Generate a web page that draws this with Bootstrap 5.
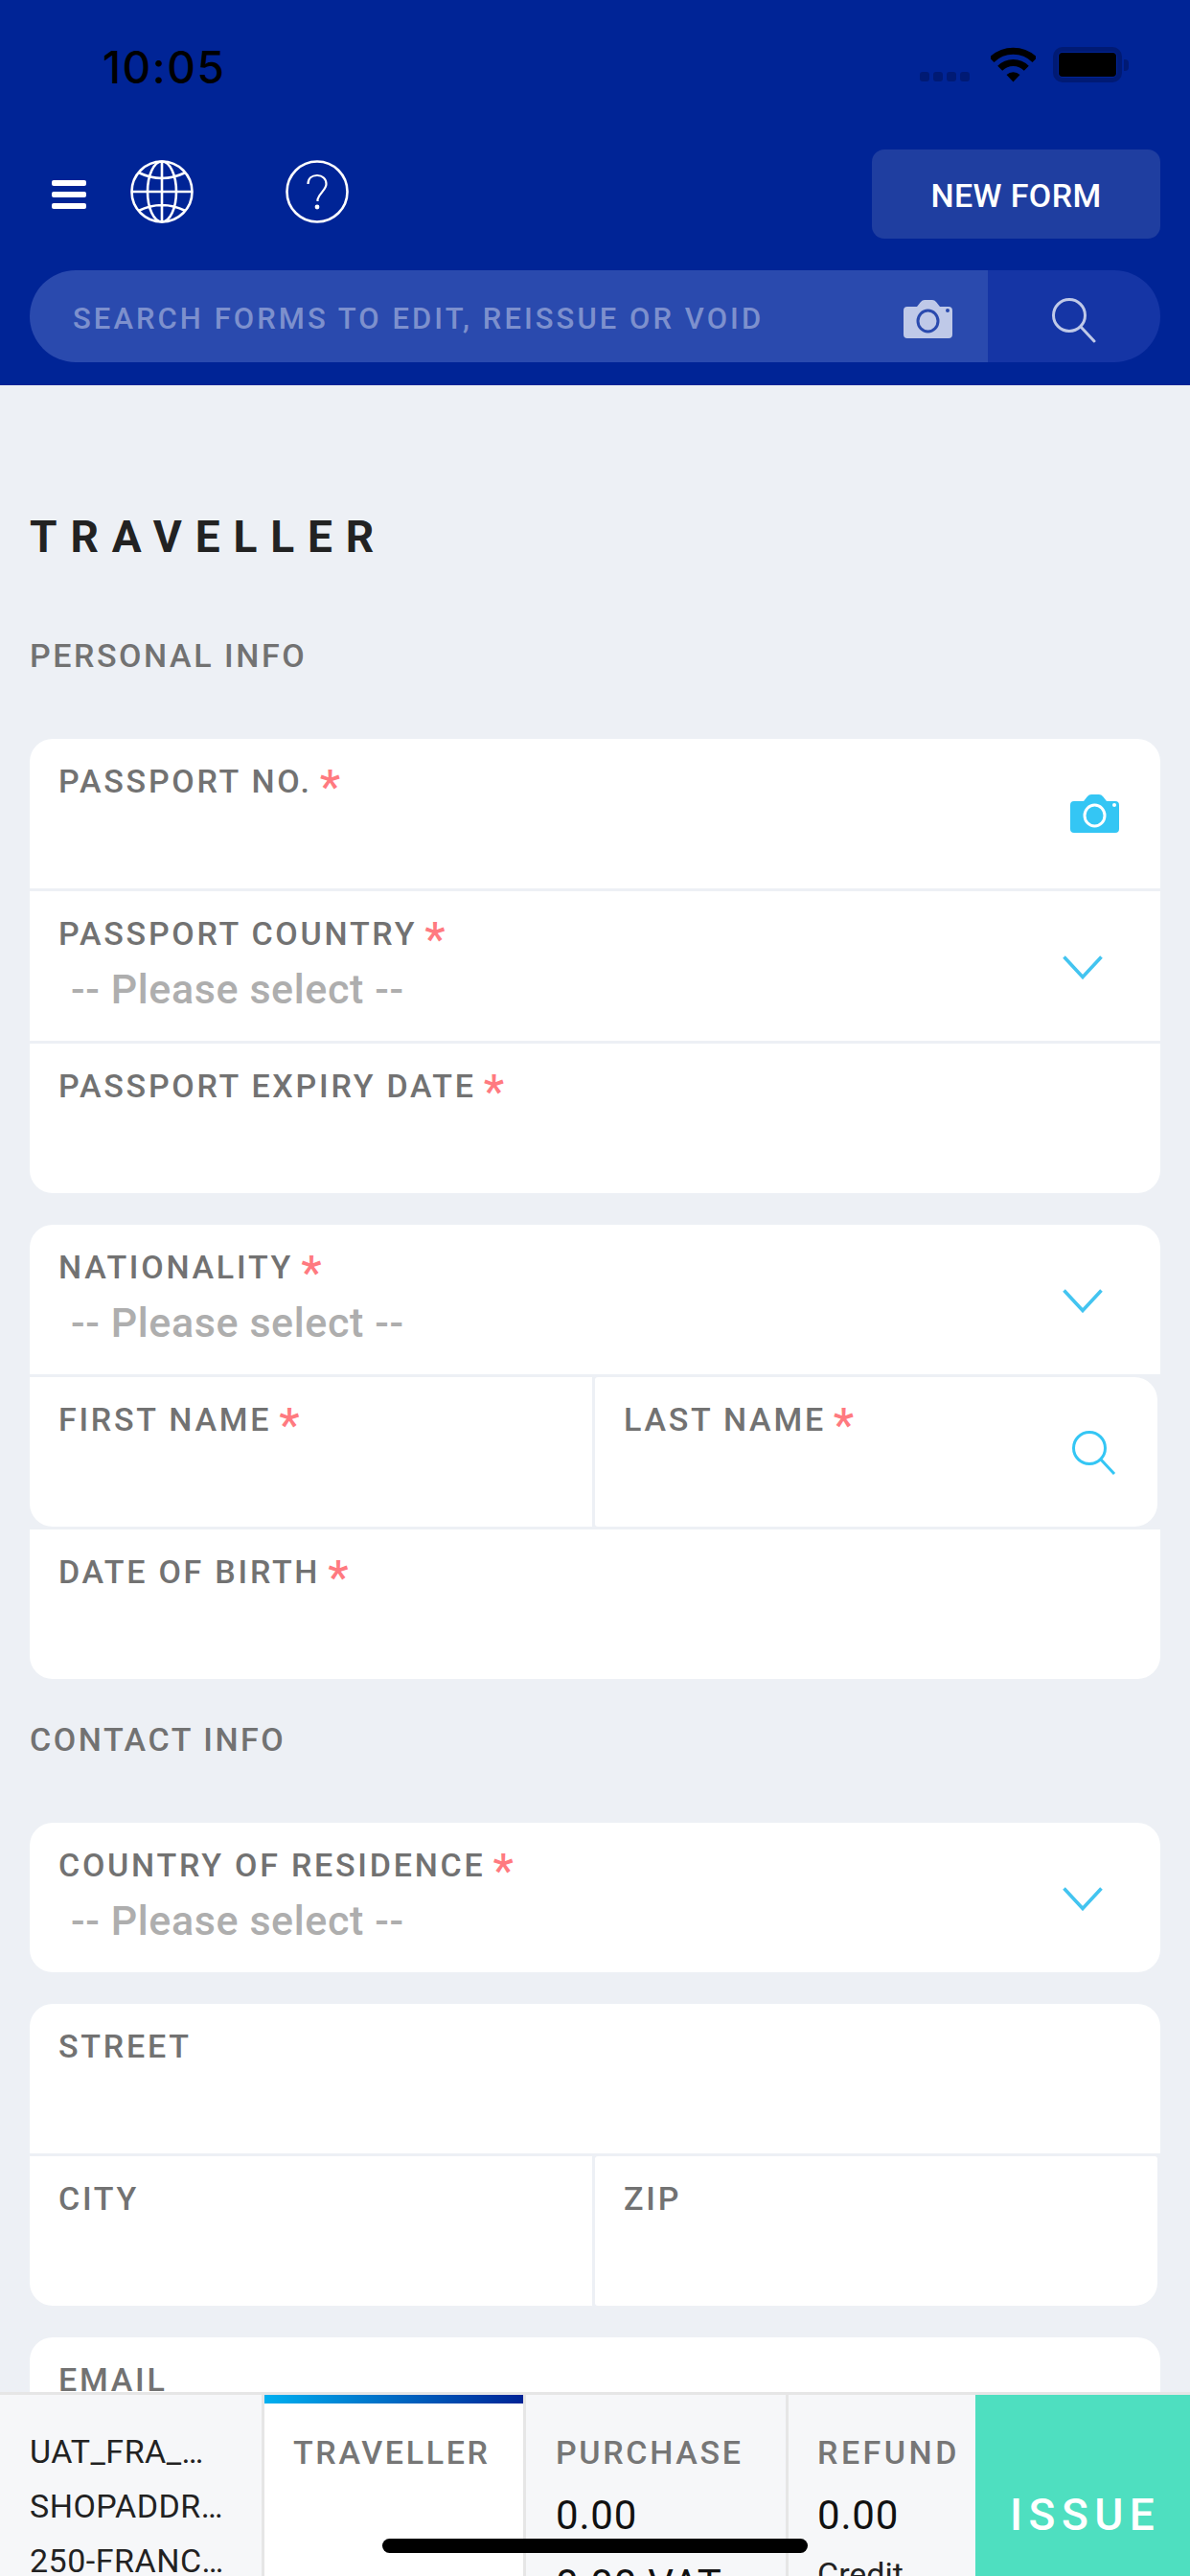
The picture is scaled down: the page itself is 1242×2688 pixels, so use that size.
<!DOCTYPE html>
<html lang="en">
<head>
<meta charset="utf-8">
<title>Traveller</title>
<link rel="stylesheet" href="https://cdn.jsdelivr.net/npm/bootstrap@5.3.0/dist/css/bootstrap.min.css">
<style>
html,body{width:1242px;height:2688px;overflow:hidden}
body{font-family:Roboto,"Liberation Sans",sans-serif;background:#edf0f5;color:#222;position:relative}
.shell{height:2688px}
.topbar{height:402px;background:#002496;padding:0 31px}
.statusrow{height:156px;padding-top:49px}
.clock{margin-left:76px;margin-top:-2px;font:500 46px/46px Inter,Roboto,sans-serif;color:#000;letter-spacing:1.5px;height:46px}
.signal{gap:4px;margin-top:26px;margin-right:22px}
.signal i{display:block;width:10px;height:10px;border-radius:3px;background:#001a74}
.batt{width:72px;height:37px;border:5px solid #001a74;border-radius:10px;padding:1px;margin-left:18px}
.batt b{display:block;height:100%;border-radius:4px;background:#000}
.battnub{width:5px;height:12px;background:#001a74;border-radius:0 4px 4px 0;margin:0 33px 0 2px;align-self:center}
.toolrow{height:93px}
.burger{margin-left:23px;margin-top:1px;width:36px;gap:6px}
.burger i{display:block;height:6px;border-radius:2px;background:#fff}
.ico-globe{margin-left:46px;margin-top:-5px}
.ico-help{margin-left:96px;margin-top:-5px}
.newform.btn{margin-left:auto;width:301px;height:93px;padding:3px 0 0;background:#1f3ea0;border:0;border-radius:13px;color:#fff;font-size:34px;font-weight:500;letter-spacing:.4px}
.searchbar{margin-top:33px;height:96px;border-radius:48px;overflow:hidden}
.searchtext{width:1000px;background:#2a4aae;padding:6px 37px 0 45px}
.searchtext span{font-size:31px;font-weight:500;letter-spacing:3.05px;color:#7d90cd;white-space:nowrap}
.searchgo{flex:1;background:#1535a5;padding:9px 0 0 67px}
.page{padding:0 31px;height:2094px;overflow:hidden}
.pagetitle{margin:128px 0 0;font-size:46px;line-height:60px;font-weight:700;letter-spacing:13.9px;color:#222}
.subtitle{font-size:34px;line-height:40px;font-weight:500;color:#727272;letter-spacing:2.55px;margin:0}
.sub-a{margin-top:74px}
.sub-b{margin-top:43px}
.stack{gap:33px;margin-top:67px}
.fcard.card{border:0;border-radius:24px;overflow:hidden;background:#edf0f5;gap:3px}
.frow{height:156px;background:#fff}
.frow.pair{background:#edf0f5}
.fcell{background:#fff;padding:24px 0 0 30px;height:156px}
.fleft{width:587px}
.fright{width:587px;margin-left:3px}
.bl-round{border-bottom-left-radius:24px}
.r-round{border-radius:3px 24px 24px 3px}
.br-round{border-radius:3px 3px 24px 3px}
.flabel{font-size:34px;line-height:40px;font-weight:500;letter-spacing:2.75px;color:#727272;margin:0;white-space:nowrap}
.req{color:#ff7a80;margin-left:8px;font-size:48px;line-height:0;font-weight:500;letter-spacing:0;vertical-align:-10px}
.fvalue{font-size:43px;line-height:48px;font-weight:500;color:#aeaeae;margin:14px 0 0 13px;letter-spacing:.6px;white-space:nowrap}
.side-cam{margin-right:43px;margin-top:-24px}
.side-chev{margin-right:60px;margin-top:-21px}
.side-find{margin-right:43px;margin-top:-21px}
.dock{height:192px;border-top:3px solid #e6e6e6;background:#f6f7f9;overflow:hidden}
.dcell{height:189px;border-right:3px solid #e6e6e6;overflow:hidden;padding:40px 0 0 30px}
.dshop{width:276px;padding:31px 0 0 31px;font-size:34px;line-height:57px;color:#222;letter-spacing:.5px}
.dshop div{white-space:nowrap}
.dtrav{width:273px;background:#fff;position:relative}
.dtrav::before{content:"";position:absolute;left:0;right:0;top:0;height:9px;background:linear-gradient(90deg,#00b0f0,#002496)}
.dpur{width:274px;padding-left:31px}
.dref{width:195px;border-right:0}
.dhead{font-size:34px;font-weight:500;line-height:40px;letter-spacing:2.65px;color:#767676;white-space:nowrap}
.dref .dhead{letter-spacing:3.5px}
.dnum{font-size:42px;line-height:48px;color:#111;margin-top:22px;letter-spacing:.8px;white-space:nowrap}
.dnum2{margin-top:24px}
.dnote{font-size:34px;line-height:40px;color:#222;margin-top:17px}
.dissue{width:224px;height:189px;background:#4edfc0;color:#fff;font-size:46px;line-height:60px;font-weight:500;letter-spacing:6.5px;padding:95px 0 0 36px}
.homebar{position:absolute;left:399px;top:2649px;width:444px;height:15px;border-radius:8px;background:#000}
</style>
</head>
<body>
<div class="shell d-flex flex-column">
  <header class="topbar">
    <div class="statusrow d-flex align-items-start">
      <div class="clock">10:05</div>
      <div class="ms-auto d-flex align-items-start">
        <div class="signal d-flex"><i></i><i></i><i></i><i></i></div>
        <svg width="47" height="37" viewBox="0 0 47 37" aria-hidden="true"><path d="M1 13.4A32 32 0 0 1 46 13.4M9.7 22.2A19.5 19.5 0 0 1 37.3 22.2" fill="none" stroke="#000" stroke-width="7"/><path d="M23.5 36.5L16.5 29A10 10 0 0 1 30.5 29Z" fill="#000"/></svg>
        <div class="batt"><b></b></div>
        <div class="battnub"></div>
      </div>
    </div>
    <div class="toolrow d-flex align-items-center">
      <div class="burger d-flex flex-column"><i></i><i></i><i></i></div>
      <svg class="ico-globe" width="66" height="66" viewBox="0 0 66 66" fill="none" stroke="#fff" stroke-width="2.6" aria-hidden="true"><circle cx="33" cy="33" r="31.5"/><ellipse cx="33" cy="33" rx="15" ry="31.5"/><path d="M33 1.5V64.5M1.5 33H64.5M8.5 13Q33 25 57.5 13M8.5 53Q33 41 57.5 53"/></svg>
      <svg class="ico-help" width="66" height="66" viewBox="0 0 66 66" fill="none" stroke="#fff" stroke-width="2.6" aria-hidden="true"><circle cx="33" cy="33" r="31.5"/><path d="M23.5 25C23.5 19 27.5 16 33 16C38.5 16 42.5 19.5 42.5 25C42.5 31 35.5 34 33.5 41V43" stroke-width="2.2"/><circle cx="33" cy="49" r="2.4" fill="#fff" stroke="none"/></svg>
      <button type="button" class="btn newform">NEW FORM</button>
    </div>
    <div class="searchbar d-flex">
      <div class="searchtext d-flex align-items-center justify-content-between">
        <span>SEARCH FORMS TO EDIT, REISSUE OR VOID</span>
        <svg width="51" height="40" viewBox="0 0 51 40" aria-hidden="true"><path d="M4 7H14L18 2Q19.5 0 22 0H30Q32.5 0 34 2L38 7H47Q51 7 51 11V36Q51 40 47 40H4Q0 40 0 36V11Q0 7 4 7Z" fill="#bfc9e8"/><ellipse cx="25.5" cy="22" rx="10.5" ry="11" fill="none" stroke="#2a4aae" stroke-width="3"/><circle cx="46" cy="11" r="2" fill="#2a4aae"/></svg>
      </div>
      <div class="searchgo d-flex align-items-center">
        <svg width="46" height="47" viewBox="0 0 46 47" fill="none" stroke="#bfc9e8" stroke-width="3" aria-hidden="true"><circle cx="18" cy="18" r="16.5"/><path d="M30 30L44 45" stroke-linecap="round"/></svg>
      </div>
    </div>
  </header>

  <main class="page">
    <h1 class="pagetitle">TRAVELLER</h1>
    <h2 class="subtitle sub-a">PERSONAL INFO</h2>
    <div class="stack d-flex flex-column">
      <section class="fcard card">
        <div class="frow fcell d-flex justify-content-between align-items-center">
          <div class="align-self-start"><p class="flabel">PASSPORT NO.<span class="req">*</span></p></div>
          <svg class="side-cam" width="51" height="40" viewBox="0 0 51 40" aria-hidden="true"><path d="M4 7H14L18 2Q19.5 0 22 0H30Q32.5 0 34 2L38 7H47Q51 7 51 11V36Q51 40 47 40H4Q0 40 0 36V11Q0 7 4 7Z" fill="#34c6f4"/><ellipse cx="25.5" cy="22" rx="10.5" ry="11" fill="none" stroke="#fff" stroke-width="3"/><circle cx="46" cy="11" r="2" fill="#fff"/></svg>
        </div>
        <div class="frow fcell d-flex justify-content-between align-items-center">
          <div class="align-self-start"><p class="flabel">PASSPORT COUNTRY<span class="req">*</span></p><p class="fvalue">-- Please select --</p></div>
          <svg class="side-chev" width="42" height="25" viewBox="0 0 42 25" fill="none" stroke="#43c4f0" stroke-width="3.6" aria-hidden="true"><path d="M1.5 1.5L21 22.5L40.5 1.5"/></svg>
        </div>
        <div class="frow fcell">
          <p class="flabel">PASSPORT EXPIRY DATE<span class="req">*</span></p>
        </div>
      </section>

      <section class="fcard card">
        <div class="frow fcell d-flex justify-content-between align-items-center">
          <div class="align-self-start"><p class="flabel">NATIONALITY<span class="req">*</span></p><p class="fvalue">-- Please select --</p></div>
          <svg class="side-chev" width="42" height="25" viewBox="0 0 42 25" fill="none" stroke="#43c4f0" stroke-width="3.6" aria-hidden="true"><path d="M1.5 1.5L21 22.5L40.5 1.5"/></svg>
        </div>
        <div class="frow pair d-flex">
          <div class="fcell fleft bl-round"><p class="flabel">FIRST NAME<span class="req">*</span></p></div>
          <div class="fcell fright r-round d-flex justify-content-between align-items-center">
            <div class="align-self-start"><p class="flabel">LAST NAME<span class="req">*</span></p></div>
            <svg class="side-find" width="46" height="47" viewBox="0 0 46 47" fill="none" stroke="#34c6f4" stroke-width="3" aria-hidden="true"><circle cx="18" cy="18" r="16.5"/><path d="M30 30L44 45"/></svg>
          </div>
        </div>
        <div class="frow fcell">
          <p class="flabel">DATE OF BIRTH<span class="req">*</span></p>
        </div>
      </section>
    </div>

    <h2 class="subtitle sub-b">CONTACT INFO</h2>
    <div class="stack d-flex flex-column">
      <section class="fcard card">
        <div class="frow fcell d-flex justify-content-between align-items-center">
          <div class="align-self-start"><p class="flabel">COUNTRY OF RESIDENCE<span class="req">*</span></p><p class="fvalue">-- Please select --</p></div>
          <svg class="side-chev" width="42" height="25" viewBox="0 0 42 25" fill="none" stroke="#43c4f0" stroke-width="3.6" aria-hidden="true"><path d="M1.5 1.5L21 22.5L40.5 1.5"/></svg>
        </div>
      </section>
      <section class="fcard card">
        <div class="frow fcell"><p class="flabel">STREET</p></div>
        <div class="frow pair d-flex">
          <div class="fcell fleft"><p class="flabel">CITY</p></div>
          <div class="fcell fright br-round"><p class="flabel">ZIP</p></div>
        </div>
      </section>
      <section class="fcard card">
        <div class="frow fcell"><p class="flabel">EMAIL</p></div>
      </section>
    </div>
  </main>

  <footer class="dock d-flex">
    <div class="dcell dshop"><div>UAT_FRA_…</div><div>SHOPADDR…</div><div>250-FRANC…</div></div>
    <div class="dcell dtrav"><div class="dhead">TRAVELLER</div></div>
    <div class="dcell dpur"><div class="dhead">PURCHASE</div><div class="dnum">0.00</div><div class="dnum dnum2">0.00 VAT</div></div>
    <div class="dcell dref"><div class="dhead">REFUND</div><div class="dnum">0.00</div><div class="dnote">Credit</div></div>
    <div class="dissue">ISSUE</div>
  </footer>
</div>
<div class="homebar"></div>
<script src="https://cdn.jsdelivr.net/npm/bootstrap@5.3.0/dist/js/bootstrap.bundle.min.js"></script>
</body>
</html>
